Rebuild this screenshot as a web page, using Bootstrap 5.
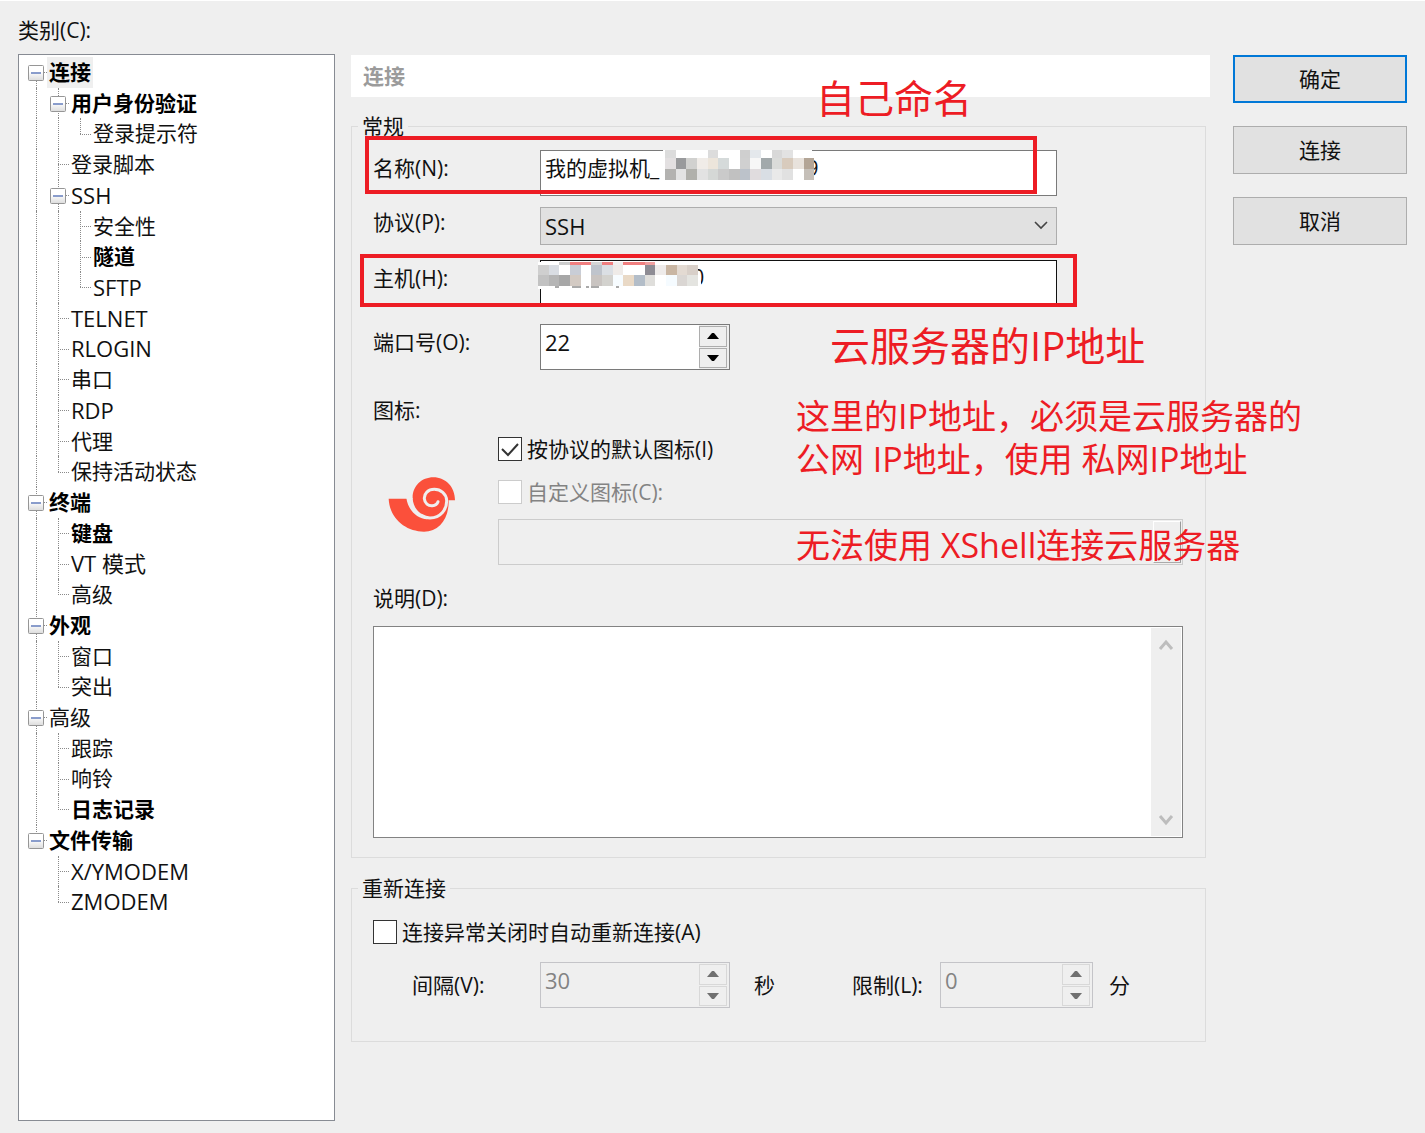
<!DOCTYPE html>
<html lang="zh-CN">
<head>
<meta charset="utf-8">
<meta name="viewport" content="width=device-width, initial-scale=1">
<title>会话属性</title>
<link href="https://cdn.jsdelivr.net/npm/bootstrap@5.3.0/dist/css/bootstrap.min.css" rel="stylesheet">
<style>
  body { background: #efefef; color: #111; font: 21px/30px "Open Sans", "Noto Sans CJK SC", sans-serif; }
  .dialog-page { border-top: 1px solid #fff; padding: 14px 18px 12px; }
  .side-pane { width: 317px; margin-right: 16px; }
  .main-pane { margin: 40px 23px 0 0; min-width: 0; }
  .action-pane { width: 174px; margin-top: 40px; gap: 23px; }

  /* category tree */
  .tree-box { background: #fff; border: 1px solid #878b93; margin-top: 9px; padding: 2px 6px; }
  .tree-list { display: grid; grid-auto-rows: 1fr; height: 860px; }
  .tree-list li { display: flex; min-height: 0; }
  .tree-list a { color: #111; text-decoration: none; padding: 0 2px; white-space: nowrap; line-height: 30px; }
  .tree-list a.fw-bold { color: #000; }
  .tree-list a.active { background: #efefef; }
  .tree-list a.latin { font-size: 22px; }
  .guide { position: relative; width: 22px; flex: none; }
  .guide::before { content: ""; position: absolute; left: 11px; top: 0; bottom: 0; border-left: 1px dotted #8a8a8a; }
  .guide.elbow::before { bottom: 50%; }
  .guide.root-first::before { top: 50%; }
  .guide.blank::before { display: none; }
  .guide.tee::after, .guide.elbow::after, .guide.knob::after { content: ""; position: absolute; left: 11px; right: 0; top: 50%; border-top: 1px dotted #8a8a8a; }
  .guide svg { position: absolute; z-index: 1; left: 3px; top: 8px; }

  /* form */
  .pane-title { background: #fff; height: 42px; line-height: 42px; padding-left: 12px; color: #9b9b9b; font-size: 21px; }
  .group-box { border: 1px solid #dcdcdc; margin: 14px 4px 0 0; padding: 0 22px 19px 21px; }
  .group-box legend { float: none; width: auto; margin: 0 0 0 -15px; padding: 0 4px; font-size: 21px; line-height: 30px; }
  .group-box.reconnect { margin-top: 15px; padding-bottom: 33px; }
  .form-line { margin-right: 126px; }
  .line-label { width: 167px; flex: none; line-height: 30px; }
  .line-label.indented { padding-left: 39px; }
  .drop-label { padding-top: 3px; }
  .unit-sec { width: 98px; margin-left: 24px; }
  .limit-label { width: 88px; }
  .unit-min { margin-left: 16px; }
  .win-input { height: 46px; min-width: 0; border: 1px solid #7a7a7a; border-radius: 0; background: #fff; color: #111; padding: 0 4px 12px; line-height: 30px; }
  .win-input.focused { border-color: #111; }
  .win-select { appearance: none; height: 38px; min-width: 0; border: 1px solid #adadad; border-radius: 0; color: #111; padding: 0 4px;
    background: #e1e1e1; line-height: 30px; font-size: 22px; }
  .select-arrow { position: absolute; right: 9px; top: 13px; pointer-events: none; }
  .spinner { width: 190px; height: 46px; border: 1px solid #7a7a7a; background: #fff; }
  .spinner.short { width: 153px; }
  .spinner input { border: 0; background: transparent; min-width: 0; padding: 0 4px 10px; color: #111; font-size: 22px; }
  .spinner .step-col { width: 30px; padding: 1px 2px 1px 0; gap: 1px; background: #efefef; flex: none; }
  .spinner button { flex: 1 1 0; min-height: 0; padding: 0; border: 1px solid #adadad; background: #efefef; display: flex; align-items: center; justify-content: center; color: #000; }
  .spinner.off { border-color: #c4c4c8; background: #efefef; }
  .spinner.off input { color: #838383; }
  .spinner.off button { border-color: #d8d8d8; color: #707070; }
  .tick { appearance: none; width: 24px; height: 24px; margin: 0 5px 0 0; border: 1px solid #333; background: #fff; flex: none; }
  .tick:disabled { border-color: #ccc; }
  .tick-holder { position: relative; display: flex; }
  .tick-holder svg { position: absolute; left: 0; top: 0; pointer-events: none; }
  .dim { color: #838383; }
  .icon-col { width: 125px; padding: 36px 0 0 7px; flex: none; }
  .browse-row { border: 1px solid #ccc; height: 46px; padding: 1px; }
  .browse-row input { border: 0; background: transparent; min-width: 0; }
  .browse-row button { width: 28px; border: 1px solid #fff; border-right-color: #999; border-bottom-color: #aaa; background: #efefef; padding: 0; color: #777; display: flex; align-items: center; justify-content: center; }
  .memo { height: 212px; border: 1px solid #828282; background: #fff; padding: 1px; }
  .memo textarea { border: 0; resize: none; overflow: hidden; min-width: 0; background: #fff; }
  .memo .scroll-track { width: 30px; background: #efefef; padding: 11px 0 10px; }
  .mt-9 { margin-top: 9px; } .mt-11 { margin-top: 11px; } .mt-12 { margin-top: 12px; } .mt-13 { margin-top: 13px; }
  .mt-14 { margin-top: 14px; } .mt-15 { margin-top: 15px; } .mt-18 { margin-top: 18px; } .mt-25 { margin-top: 25px; }

  .win-btn { height: 48px; border: 1px solid #adadad; border-radius: 0; background: #e1e1e1; color: #111; font-size: 21px; line-height: 30px; padding: 0; }
  .win-btn.default { border: 2px solid #0078d7; }

  /* annotations drawn over the dialog */
  .note { position: absolute; color: #ed1c24; white-space: nowrap; pointer-events: none; }
  .note-frame { position: absolute; border: 4px solid #ed1c24; pointer-events: none; }
  .frame-name { left: 14px; top: 81px; width: 672px; height: 58px; }
  .frame-host { left: 9px; top: 199px; width: 717px; height: 53px; }
  .note-name { left: 465px; top: 21px; font-size: 39px; line-height: 44px; }
  .note-host { left: 479px; top: 269px; font-size: 40px; line-height: 44px; }
  .note-text { left: 445px; top: 340px; font-size: 34px; line-height: 43px; }
  .mosaic { position: absolute; pointer-events: none; }
  .mosaic-name { left: 311px; top: 94px; }
  .mosaic-host { left: 187px; top: 206px; }
</style>
<script src="https://cdn.jsdelivr.net/npm/bootstrap@5.3.0/dist/js/bootstrap.bundle.min.js"></script>
</head>
<body>
<svg width="0" height="0" class="position-absolute" aria-hidden="true">
  <defs>
    <linearGradient id="kg" x1="0" y1="0" x2="0" y2="1"><stop offset=".4" stop-color="#fff"/><stop offset="1" stop-color="#dcdcdc"/></linearGradient>
    <symbol id="minus" viewBox="0 0 16 16"><rect x=".5" y=".5" width="15" height="15" rx="1" fill="url(#kg)" stroke="#969696"/><path d="M3 8h10" stroke="#5a75b8" stroke-width="1.4"/></symbol>
    <symbol id="up" viewBox="0 0 12 6"><path d="M0 6L5 0h2l5 6z" fill="currentColor"/></symbol>
    <symbol id="down" viewBox="0 0 12 6"><path d="M0 0h12L7 6H5z" fill="currentColor"/></symbol>
  </defs>
</svg>
<div class="dialog-page d-flex min-vh-100">
  <nav class="side-pane d-flex flex-column flex-shrink-0" aria-label="类别">
    <div>类别(C):</div>
    <div class="tree-box flex-grow-1">
      <ul class="tree-list list-unstyled mb-0">
        <li><span class="guide knob root-first"><svg width="16" height="16"><use href="#minus"/></svg></span><a href="#" class="fw-bold active">连接</a></li>
        <li><span class="guide"></span><span class="guide knob"><svg width="16" height="16"><use href="#minus"/></svg></span><a href="#" class="fw-bold">用户身份验证</a></li>
        <li><span class="guide"></span><span class="guide"></span><span class="guide elbow"></span><a href="#">登录提示符</a></li>
        <li><span class="guide"></span><span class="guide tee"></span><a href="#">登录脚本</a></li>
        <li><span class="guide"></span><span class="guide knob"><svg width="16" height="16"><use href="#minus"/></svg></span><a href="#" class="latin">SSH</a></li>
        <li><span class="guide"></span><span class="guide"></span><span class="guide tee"></span><a href="#">安全性</a></li>
        <li><span class="guide"></span><span class="guide"></span><span class="guide tee"></span><a href="#" class="fw-bold">隧道</a></li>
        <li><span class="guide"></span><span class="guide"></span><span class="guide elbow"></span><a href="#" class="latin">SFTP</a></li>
        <li><span class="guide"></span><span class="guide tee"></span><a href="#" class="latin">TELNET</a></li>
        <li><span class="guide"></span><span class="guide tee"></span><a href="#" class="latin">RLOGIN</a></li>
        <li><span class="guide"></span><span class="guide tee"></span><a href="#">串口</a></li>
        <li><span class="guide"></span><span class="guide tee"></span><a href="#" class="latin">RDP</a></li>
        <li><span class="guide"></span><span class="guide tee"></span><a href="#">代理</a></li>
        <li><span class="guide"></span><span class="guide elbow"></span><a href="#">保持活动状态</a></li>
        <li><span class="guide knob"><svg width="16" height="16"><use href="#minus"/></svg></span><a href="#" class="fw-bold">终端</a></li>
        <li><span class="guide"></span><span class="guide tee"></span><a href="#" class="fw-bold">键盘</a></li>
        <li><span class="guide"></span><span class="guide tee"></span><a href="#" class="latin">VT 模式</a></li>
        <li><span class="guide"></span><span class="guide elbow"></span><a href="#">高级</a></li>
        <li><span class="guide knob"><svg width="16" height="16"><use href="#minus"/></svg></span><a href="#" class="fw-bold">外观</a></li>
        <li><span class="guide"></span><span class="guide tee"></span><a href="#">窗口</a></li>
        <li><span class="guide"></span><span class="guide elbow"></span><a href="#">突出</a></li>
        <li><span class="guide knob"><svg width="16" height="16"><use href="#minus"/></svg></span><a href="#">高级</a></li>
        <li><span class="guide"></span><span class="guide tee"></span><a href="#">跟踪</a></li>
        <li><span class="guide"></span><span class="guide tee"></span><a href="#">响铃</a></li>
        <li><span class="guide"></span><span class="guide elbow"></span><a href="#" class="fw-bold">日志记录</a></li>
        <li><span class="guide knob elbow"><svg width="16" height="16"><use href="#minus"/></svg></span><a href="#" class="fw-bold">文件传输</a></li>
        <li><span class="guide blank"></span><span class="guide tee"></span><a href="#" class="latin">X/YMODEM</a></li>
        <li><span class="guide blank"></span><span class="guide elbow"></span><a href="#" class="latin">ZMODEM</a></li>
      </ul>
    </div>
  </nav>

  <main class="main-pane position-relative flex-grow-1">
    <h1 class="pane-title fw-bold mb-0">连接</h1>

    <fieldset class="group-box">
      <legend>常规</legend>
      <div class="form-line d-flex mt-9">
        <label class="line-label drop-label" for="name">名称(N):</label>
        <input class="win-input flex-grow-1" id="name" type="text" value="我的虚拟机_&nbsp;&nbsp;&nbsp;&nbsp;&nbsp;&nbsp;&nbsp;&nbsp;&nbsp;&nbsp;&nbsp;&nbsp;&nbsp;&nbsp;&nbsp;&nbsp;&nbsp;&nbsp;&nbsp;&nbsp;&nbsp;&nbsp;&nbsp;&nbsp;&nbsp;&nbsp;&nbsp;9">
      </div>
      <div class="form-line d-flex mt-11">
        <label class="line-label" for="proto">协议(P):</label>
        <div class="position-relative flex-grow-1 d-flex">
          <select class="win-select w-100" id="proto"><option>SSH</option></select>
          <svg class="select-arrow" width="14" height="10" viewBox="0 0 14 10" fill="none" stroke="#444" stroke-width="1.6"><path d="M1 2l6 6 6-6"/></svg>
        </div>
      </div>
      <div class="form-line d-flex mt-15">
        <label class="line-label drop-label" for="host">主机(H):</label>
        <input class="win-input focused flex-grow-1" id="host" type="text" value="&nbsp;&nbsp;&nbsp;&nbsp;&nbsp;&nbsp;&nbsp;&nbsp;&nbsp;&nbsp;&nbsp;&nbsp;&nbsp;&nbsp;&nbsp;&nbsp;&nbsp;&nbsp;&nbsp;&nbsp;&nbsp;&nbsp;&nbsp;&nbsp;&nbsp;&nbsp;&nbsp;0">
      </div>
      <div class="form-line d-flex mt-18">
        <label class="line-label drop-label" for="port">端口号(O):</label>
        <div class="spinner d-flex">
          <input class="flex-grow-1" id="port" type="text" value="22">
          <div class="step-col d-flex flex-column">
            <button type="button" aria-label="增加"><svg width="12" height="6"><use href="#up"/></svg></button>
            <button type="button" aria-label="减少"><svg width="12" height="6"><use href="#down"/></svg></button>
          </div>
        </div>
      </div>

      <div class="mt-25">图标:</div>
      <div class="d-flex mt-9">
        <div class="icon-col">
          <svg class="d-block" width="90" height="70" viewBox="0 0 270 210" aria-hidden="true">
            <path fill="#fb503b" d="M26 86H98C96 50 124 22 160 22C197 22 225 51 225 91H206C207 148 177 184 132 185C76 184 29 146 26 86Z"/>
            <path fill="#efefef" d="M79 84H98C99 106 110 124 128 134L142 148C110 146 84 120 79 84Z"/>
            <path fill="none" stroke="#efefef" stroke-width="9" stroke-linecap="round" d="M124 136C136 143 142 144 150 144C182 143 201 118 200 91C199 71 182 58 163 58C144 58 132 71 133 86C134 100 145 108 157 107C166 106 172 101 174 95"/>
          </svg>
        </div>
        <div class="flex-grow-1 d-flex flex-column">
          <div class="d-flex align-items-center">
            <span class="tick-holder"><input class="tick" type="checkbox" id="def" checked><svg width="24" height="24" fill="none" stroke="#333" stroke-width="2"><path d="M4 12l6 6L20 7"/></svg></span>
            <label for="def">按协议的默认图标(I)</label>
          </div>
          <div class="d-flex align-items-center mt-13">
            <input class="tick" type="checkbox" id="custom" disabled>
            <label class="dim" for="custom">自定义图标(C):</label>
          </div>
          <div class="browse-row d-flex mt-12">
            <input class="flex-grow-1" type="text" aria-label="自定义图标路径" disabled>
            <button type="button" aria-label="浏览" disabled><svg width="14" height="20" fill="#777"><path d="M6 13h2v2H6z"/></svg></button>
          </div>
        </div>
      </div>

      <div class="mt-18"><label for="memo">说明(D):</label></div>
      <div class="memo d-flex mt-13">
        <textarea class="flex-grow-1" id="memo"></textarea>
        <div class="scroll-track d-flex flex-column align-items-center justify-content-between">
          <svg width="16" height="12" fill="none" stroke="#bdbdbd" stroke-width="3"><path d="M2 10l6-7 6 7"/></svg>
          <svg width="16" height="12" fill="none" stroke="#bdbdbd" stroke-width="3"><path d="M2 2l6 7 6-7"/></svg>
        </div>
      </div>
    </fieldset>

    <fieldset class="group-box reconnect">
      <legend>重新连接</legend>
      <div class="d-flex align-items-center mt-14">
        <input class="tick" type="checkbox" id="auto">
        <label for="auto">连接异常关闭时自动重新连接(A)</label>
      </div>
      <div class="d-flex align-items-center mt-15">
        <label class="line-label indented" for="gap">间隔(V):</label>
        <div class="spinner off d-flex">
          <input class="flex-grow-1" id="gap" type="text" value="30" disabled>
          <div class="step-col d-flex flex-column">
            <button type="button" aria-label="增加" disabled><svg width="12" height="6"><use href="#up"/></svg></button>
            <button type="button" aria-label="减少" disabled><svg width="12" height="6"><use href="#down"/></svg></button>
          </div>
        </div>
        <span class="unit-sec">秒</span>
        <label class="limit-label" for="limit">限制(L):</label>
        <div class="spinner short off d-flex">
          <input class="flex-grow-1" id="limit" type="text" value="0" disabled>
          <div class="step-col d-flex flex-column">
            <button type="button" aria-label="增加" disabled><svg width="12" height="6"><use href="#up"/></svg></button>
            <button type="button" aria-label="减少" disabled><svg width="12" height="6"><use href="#down"/></svg></button>
          </div>
        </div>
        <span class="unit-min">分</span>
      </div>
    </fieldset>

    <svg class="mosaic mosaic-name" width="160" height="34" viewBox="-3 0 160 34" aria-hidden="true">
      <path fill="#fff" d="M-2 1H147V26L142 32H-1Z"/>
      <g id="m1"></g>
    </svg>
    <svg class="mosaic mosaic-host" width="170" height="30" viewBox="0 0 170 30" aria-hidden="true">
      <path fill="#fff" d="M0 1H115L140 4L158 8L163 15V28H0Z"/>
      <g id="m2"></g>
      <path d="M17 26h4M34 26h9M48 26h3M53 26h8M78 26h3" stroke="#555" stroke-width="1"/>
    </svg>

    <div class="note-frame frame-name"></div>
    <div class="note-frame frame-host"></div>
    <div class="note note-name">自己命名</div>
    <div class="note note-host">云服务器的IP地址</div>
    <div class="note note-text">这里的IP地址，必须是云服务器的<br>公网 IP地址，使用 私网IP地址<br><br>无法使用 XShell连接云服务器</div>
  </main>

  <div class="action-pane d-flex flex-column flex-shrink-0">
    <button type="button" class="btn win-btn default">确定</button>
    <button type="button" class="btn win-btn">连接</button>
    <button type="button" class="btn win-btn">取消</button>
  </div>
</div>
<script>
  // Pixelated blocks that hide the private part of each field
  function mosaic(id, tops, rows) {
    const g = document.getElementById(id);
    rows.forEach((row, r) => row.split(' ').forEach((c, i) => {
      if (c === '-') return;
      const q = document.createElementNS('http://www.w3.org/2000/svg', 'rect');
      const x = Math.round(i * 32 / 3), x2 = Math.round((i + 1) * 32 / 3);
      q.setAttribute('x', x); q.setAttribute('y', tops[r]);
      q.setAttribute('width', x2 - x); q.setAttribute('height', tops[r + 1] - tops[r]);
      q.setAttribute('fill', '#' + c);
      g.appendChild(q);
    }));
  }
  mosaic('m1', [1, 9, 20, 31], [
    'dcdcdc - - - dcdcdc - - cfcfcf e4e8ec - d8d8d8 e2e2e2 - -',
    'e3e0e1 999a9c d1d1cf f0ece8 ece5db d5dada - d0d0d0 f7f7f7 a2a9ab dadbd9 d8cbbd e8e2dc b3a596',
    'b3b2b0 e3e3e3 b0b0ab e2e2e2 d5d8d6 cacaca c1c1c1 bcc2ca e0dcde d9dee4 e9e9e9 e1e1e1 - c5bfb8'
  ]);
  mosaic('m2', [1, 4, 14, 25], [
    '- - cccccc f07f80 f07f80 d5d5d5 f07f80 f0eeee f08080 f08080 f0a0a0 -',
    'cfcfcf d9dde3 - c9cdd6 - bfc4cc dbdfe4 efebe8 - - 8e8c94 eeebea c9b6a3 e3dad2 d8cfc8',
    'c2c2c2 b5b5b5 a7a7a7 d3cac3 - c9c4c1 d3d2ce f7fcff e9d9c6 b3bdc8 dfdedb - f5fbff dad6d3 e4e4e0'
  ]);
</script>
</body>
</html>
